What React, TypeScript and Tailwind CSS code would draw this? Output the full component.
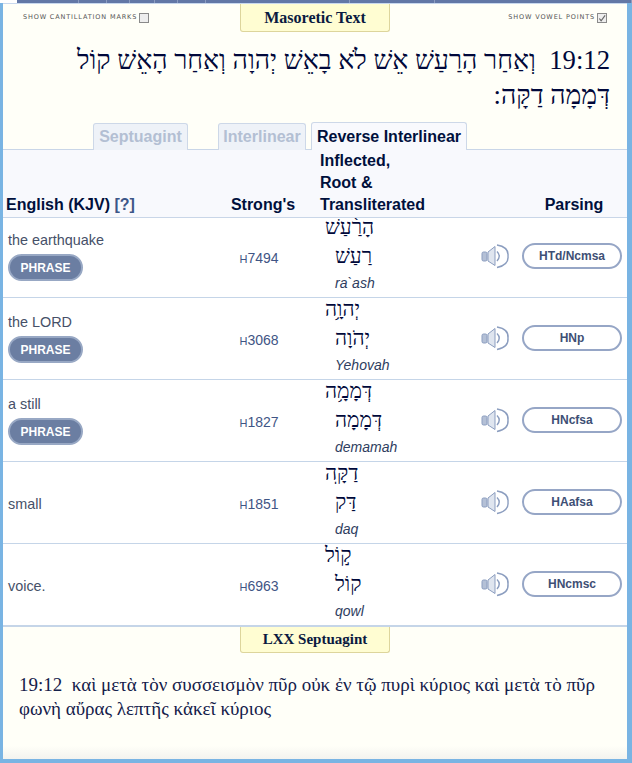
import React, { ReactElement } from 'react';

type WordRow = {
  english: string;
  phrase: boolean;
  strongs: string;
  word: string;
  root: string;
  translit: string;
  parsing: string;
};

const rows: WordRow[] = [
  { english: 'the earthquake', phrase: true, strongs: '7494', word: 'הָרַ֫עַשׁ', root: 'רַעַשׁ', translit: 'ra`ash', parsing: 'HTd/Ncmsa' },
  { english: 'the LORD', phrase: true, strongs: '3068', word: 'יְהוָ֥ה', root: 'יְהֹוָה', translit: 'Yehovah', parsing: 'HNp' },
  { english: 'a still', phrase: true, strongs: '1827', word: 'דְּמָמָ֥ה', root: 'דְּמָמָה', translit: 'demamah', parsing: 'HNcfsa' },
  { english: 'small', phrase: false, strongs: '1851', word: 'דַקָּֽה', root: 'דַּק', translit: 'daq', parsing: 'HAafsa' },
  { english: 'voice.', phrase: false, strongs: '6963', word: 'ק֣וֹל', root: 'קוֹל', translit: 'qowl', parsing: 'HNcmsc' },
];

const stripWidths = ['w-[62px]', 'w-[28px]', 'w-[23px]', 'w-[25px]', 'w-[23px]', 'w-[28px]', 'w-[144px]', 'w-[85px]', 'flex-1'];

const gridCols = 'grid grid-cols-[223px_74px_180px_42px_100px_5px]';

const SpeakerIcon = (): ReactElement => (
  <svg width="30" height="26" viewBox="0 0 30 26" fill="none">
    <rect x="1" y="9" width="5" height="9" rx="1.5" fill="#b4c0d6" stroke="#8b9dbf" />
    <path d="M7 9 L14 3.5 V22.5 L7 18 Z" fill="#dfe5ef" stroke="#8b9dbf" />
    <path d="M16 8.5 Q20.5 13 16 18" stroke="#8b9dbf" strokeWidth="1.4" />
    <path d="M16 2 Q28 4 27 13 Q28 22 16 24.5" stroke="#8b9dbf" strokeWidth="1.4" />
  </svg>
);

const Label = ({ text, checked }: { text: string; checked: boolean }): ReactElement => (
  <div className="flex items-center gap-[2px] font-['DejaVu_Sans',sans-serif] text-[6.5px] tracking-[0.85px] text-[#555555] uppercase">
    <span>{text}</span>
    <span className="flex h-[10px] w-[10px] items-center justify-center border border-[#8a8a8a] bg-[#eeeeee]">
      {checked && (
        <svg width="9" height="9" viewBox="0 0 9 9" fill="none">
          <path d="M1.5 4.5 L3.5 7 L8 1" stroke="#666666" strokeWidth="1.3" />
        </svg>
      )}
    </span>
  </div>
);

const Banner = ({ title, height }: { title: string; height: string }): ReactElement => (
  <div
    className={`flex w-[150px] items-center justify-center rounded-b-[3px] border border-t-0 border-[#ddd59c] bg-[#fffdd2] font-['Liberation_Serif',serif] font-semibold text-[#0a1a40] ${height}`}
  >
    {title}
  </div>
);

const App = (): ReactElement => {
  return (
    <div className="flex h-[763px] w-[632px] flex-col overflow-hidden bg-[#79b4e3] font-['Liberation_Sans',sans-serif]">
      <div className="flex h-[3px] shrink-0">
        <div className="w-[17px] bg-white" />
        {stripWidths.map((width, i) => (
          <div key={i} className={`border-r border-[#8c9cc0] bg-[#6277a6] ${width}`} />
        ))}
      </div>

      <div className="ml-[3px] mr-[5px] mb-[4px] flex flex-1 flex-col border-t border-[#c8d8ee] bg-[#fffff8]">
        <div className="grid h-[28px] grid-cols-[237px_150px_1fr] items-start">
          <div className="pl-[20px] pt-[9px]">
            <Label text="Show Cantillation Marks" checked={false} />
          </div>
          <Banner title="Masoretic Text" height="h-[28px] text-[16px]" />
          <div className="flex justify-end pr-[20px] pt-[9px]">
            <Label text="Show Vowel Points" checked={true} />
          </div>
        </div>

        <p
          dir="rtl"
          className="mt-[11px] h-[79px] pl-[50px] pr-[17px] font-['Liberation_Serif',serif] text-[26.7px] leading-[35px] text-[#00083a]"
        >
          <span dir="ltr">19:12</span>
          {'\u00A0\u00A0'}
          וְאַחַר הָרַעַשׁ אֵשׁ לֹא בָאֵשׁ יְהוָה וְאַחַר הָאֵשׁ קוֹל דְּמָמָה דַקָּה:
        </p>

        <div className="relative z-20 -mb-px flex h-[28px] items-end pl-[90px] text-[16px] font-bold">
          <div className="flex h-[27px] w-[95px] items-center justify-center rounded-t-[3px] border border-b-0 border-[#cdd8e8] bg-[#eef2f8] text-[#b3bfd3]">
            Septuagint
          </div>
          <div className="ml-[30px] flex h-[27px] w-[88px] items-center justify-center rounded-t-[3px] border border-b-0 border-[#cdd8e8] bg-[#eef2f8] text-[#b3bfd3]">
            Interlinear
          </div>
          <div className="ml-[5px] flex h-[28px] w-[156px] items-center justify-center rounded-t-[3px] border border-b-0 border-[#cdd8e8] bg-[#f8f9fd] text-[#00103c]">
            Reverse Interlinear
          </div>
        </div>

        <div className={`${gridCols} relative z-10 h-[69px] items-end border-y border-[#c9d6e8] bg-[#f8f9fd] pb-[1px] text-[16px] font-bold leading-[22px] text-[#00103c]`}>
          <div className="whitespace-nowrap pl-[3px]">
            English (KJV) <span className="text-[#3d5688]">[?]</span>
          </div>
          <div className="text-center">Strong's</div>
          <div className="pl-[20px]">
            Inflected,
            <br />
            Root &amp;
            <br />
            Transliterated
          </div>
          <div />
          <div className="pl-[4px] text-center">Parsing</div>
          <div />
        </div>

        {rows.map((row, i) => (
          <div
            key={row.strongs}
            className={`${gridCols} ${i === 0 ? '-mt-[2px]' : ''} h-[82px] shrink-0 grid-rows-[77px] items-center border-b border-[#c5d5e8] bg-white pt-[4px]`}
          >
            <div className={`flex flex-col items-start gap-[5px] pl-[5px] text-[14.4px] text-[#465068] ${row.phrase ? 'pb-[4px]' : ''}`}>
              <span className="leading-[17px]">{row.english}</span>
              {row.phrase && (
                <span className="flex h-[27px] w-[75px] items-center justify-center rounded-full border-2 border-[#98a8c4] bg-[#6b7ea2] text-[12px] font-bold text-white">
                  PHRASE
                </span>
              )}
            </div>
            <div className="pr-[8px] text-center text-[14px] text-[#3f5585]">
              <span className="text-[11px]">H</span>
              {row.strongs}
            </div>
            <div className="flex flex-col pb-[10px] pl-[25px] font-['Liberation_Serif',serif] text-[#00083a]">
              <span dir="rtl" className="w-fit text-[21px] leading-[29px]">
                {row.word}
              </span>
              <span dir="rtl" className="ml-[10px] w-fit text-[21px] leading-[28px]">
                {row.root}
              </span>
              <span className="ml-[10px] mt-[1px] font-['Liberation_Sans',sans-serif] text-[14px] italic leading-[24px] text-[#2e3d60]">
                {row.translit}
              </span>
            </div>
            <div className="mb-[5px] flex items-center pl-[1px]">
              <SpeakerIcon />
            </div>
            <div className="mb-[5px] flex h-[26px] items-center justify-center rounded-full border-2 border-[#96a6c6] bg-white text-[12px] font-bold text-[#3e4f75]">
              {row.parsing}
            </div>
            <div />
          </div>
        ))}

        <div className="flex flex-1 flex-col border-t border-[#c5d5e8] bg-gradient-to-b from-[#fffff8] from-90% to-[#f3f3ef]">
          <div className="flex justify-center">
            <Banner title="LXX Septuagint" height="h-[26px] text-[15px]" />
          </div>
          <p className="mt-[20px] pl-[16px] pr-[20px] font-['Liberation_Serif',serif] text-[19px] leading-[24px] text-[#14204a]">
            19:12&nbsp; καὶ μετὰ τὸν συσσεισμὸν πῦρ οὐκ ἐν τῷ πυρὶ κύριος καὶ μετὰ τὸ πῦρ φωνὴ αὔρας λεπτῆς κἀκεῖ κύριος
          </p>
        </div>
      </div>
    </div>
  );
};

export default App;
